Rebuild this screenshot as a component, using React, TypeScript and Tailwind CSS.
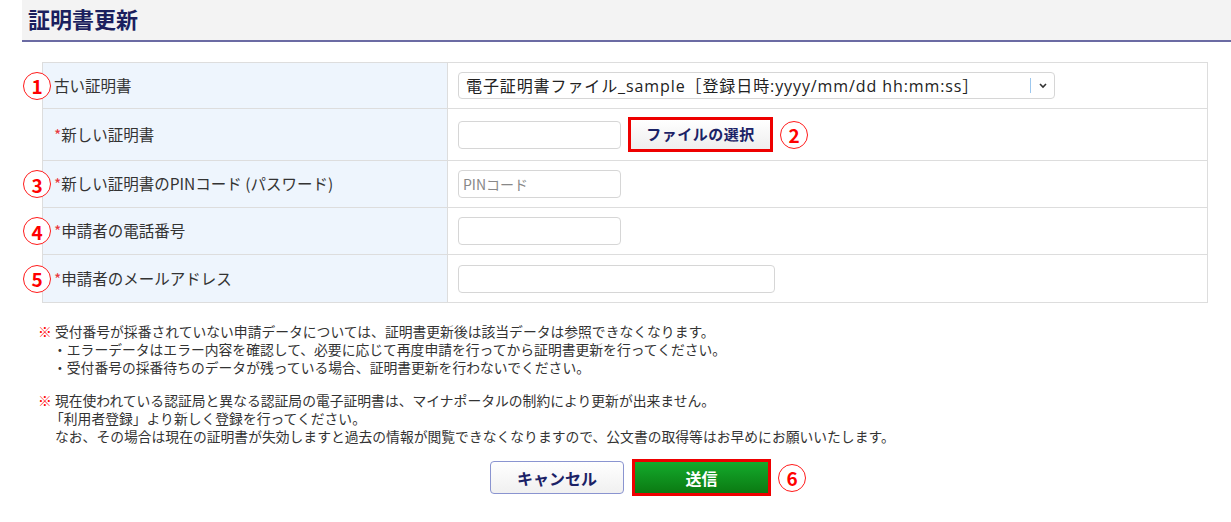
import React from "react";

const font = { fontFamily: '"Noto Sans CJK JP", "Noto Sans", sans-serif' };
const wideFont = { fontFamily: '"Open Sans", "Noto Sans CJK JP", sans-serif' };

function Num({ n, className }: { n: string; className: string }) {
  return (
    <span
      className={`absolute flex h-[28px] w-[28px] items-center justify-center rounded-full border-[1.5px] border-[#ff1a1a] bg-white text-[19px] font-bold leading-none text-[#ff0000] ${className}`}
    >
      {n}
    </span>
  );
}

function Row({
  label,
  required,
  num,
  h,
  children,
}: {
  label: string;
  required?: boolean;
  num?: string;
  h: string;
  children: React.ReactNode;
}) {
  return (
    <div className={`relative flex border-b border-[#dddddd] ${h}`}>
      {num && <Num n={num} className="left-[-20px] top-1/2 -translate-y-1/2" />}
      <div className="flex w-[405px] items-center border-r border-[#dddddd] bg-[#eef5fd] pl-[11px] text-[15.5px] text-[#333333]">
        {required && <span className="text-[#e8383d]">*</span>}
        {label}
      </div>
      <div className="relative flex flex-1 items-center pl-[10px]">{children}</div>
    </div>
  );
}

const input =
  "h-[28px] rounded-[4px] border border-[#d6d6d6] bg-white px-[4px] text-[14px] text-[#555]";

export default function App() {
  return (
    <div className="h-[522px] w-[1231px] bg-white text-[#333333]" style={font}>
      {/* Header */}
      <div className="ml-[22px] h-[42px] border-b-2 border-[#6b6ba3] bg-[#f3f3f3] pl-[6px] pt-[3px]">
        <h1 className="text-[22px] font-bold leading-[30px] text-[#1b1f5e]">証明書更新</h1>
      </div>

      {/* Form table */}
      <div className="ml-[42px] mt-[20px] w-[1166px] border-t border-r border-l border-[#dddddd]">
        <Row label="古い証明書" num="1" h="h-[46px]">
          <div className="flex h-[27px] w-[597px] items-center rounded-[4px] border border-[#d6d6d6] bg-white pl-[7px] text-[16px] text-[#222]">
            <span className="flex-1 whitespace-nowrap tracking-[0.9px]" style={wideFont}>
              電子証明書ファイル_sample［登録日時:yyyy/mm/dd hh:mm:ss］
            </span>
            <span className="h-[15px] w-px bg-[#9cc7ee]" />
            <svg width="22" height="14" viewBox="0 0 22 14" className="ml-[1px]">
              <path d="M8 5l3 3 3-3" fill="none" stroke="#333" strokeWidth="1.6" />
            </svg>
          </div>
        </Row>
        <Row label="新しい証明書" required h="h-[52px]">
          <div className={`${input} w-[163px]`} />
          <button className="ml-[7px] flex h-[35px] w-[145px] items-center justify-center border-[3px] border-[#ee0000] bg-gradient-to-b from-white to-[#eeeeee] text-[15px] font-bold tracking-[0.5px] text-[#1b2266]">
            ファイルの選択
          </button>
          <Num n="2" className="left-[332px] top-1/2 -translate-y-1/2" />
        </Row>
        <Row label="新しい証明書のPINコード (パスワード)" required num="3" h="h-[47px]">
          <div className={`${input} flex w-[163px] items-center text-[#888]`}>PINコード</div>
        </Row>
        <Row label="申請者の電話番号" required num="4" h="h-[47px]">
          <div className={`${input} w-[163px]`} />
        </Row>
        <Row label="申請者のメールアドレス" required num="5" h="h-[48px]">
          <div className={`${input} w-[317px]`} />
        </Row>
      </div>

      {/* Notes */}
      <div className="ml-[38px] mt-[19px] text-[13.8px] leading-[18px] text-[#333]">
        <p>
          <span className="font-bold text-[#ff0000]">※</span> 受付番号が採番されていない申請データについては、証明書更新後は該当データは参照できなくなります。
        </p>
        <p className="pl-[15px]">・エラーデータはエラー内容を確認して、必要に応じて再度申請を行ってから証明書更新を行ってください。</p>
        <p className="pl-[15px]">・受付番号の採番待ちのデータが残っている場合、証明書更新を行わないでください。</p>
        <p className="mt-[15px]">
          <span className="font-bold text-[#ff0000]">※</span> 現在使われている認証局と異なる認証局の電子証明書は、マイナポータルの制約により更新が出来ません。
        </p>
        <p className="pl-[12px]">「利用者登録」より新しく登録を行ってください。</p>
        <p className="pl-[17px]">なお、その場合は現在の証明書が失効しますと過去の情報が閲覧できなくなりますので、公文書の取得等はお早めにお願いいたします。</p>
      </div>

      {/* Buttons */}
      <div className="relative ml-[490px] mt-[14px] flex items-center">
        <button className="flex h-[33px] w-[134px] items-center justify-center rounded-[4px] border-[1.5px] border-[#8a94d0] bg-gradient-to-b from-white to-[#f0f0f0] text-[16px] font-bold text-[#1b2266]">
          キャンセル
        </button>
        <button className="ml-[8px] flex h-[37px] w-[139px] items-center justify-center border-[3px] border-[#ee0000] bg-gradient-to-b from-[#14ab2c] to-[#0b7a12] text-[16px] font-bold text-white">
          送信
        </button>
        <Num n="6" className="left-[288px] top-1/2 -translate-y-1/2" />
      </div>
    </div>
  );
}
